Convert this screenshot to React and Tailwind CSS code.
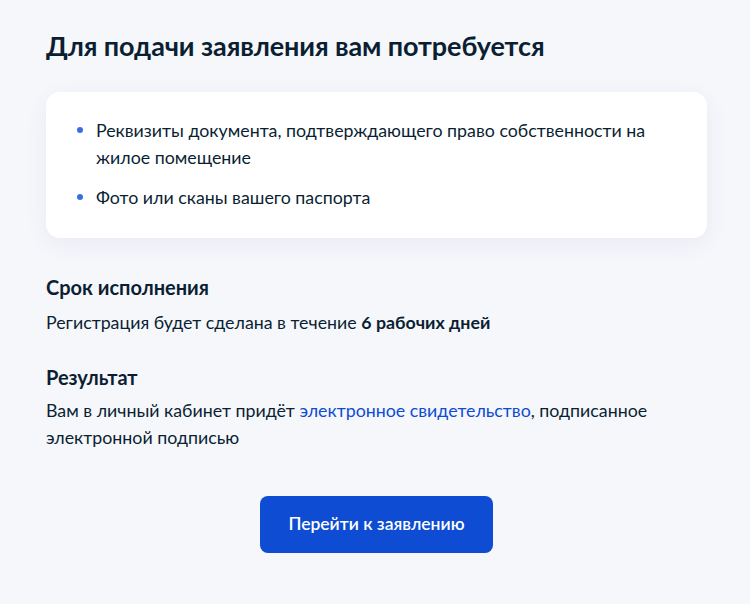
export default function App() {
  return (
    <div className="min-h-[604px] w-[750px] bg-[#f6f7fb] px-[46px] pt-[27px] text-[#0b1f33]" style={{ fontFamily: 'Lato, "Noto Sans", sans-serif' }}>
      <h1 className="text-[27px] font-bold leading-[38px] tracking-[-0.1px]">Для подачи заявления вам потребуется</h1>

      <div className="mt-[27px] w-[661px] rounded-[14px] bg-white px-[31px] pt-[25px] pb-[27px] shadow-[0_6px_24px_rgba(0,40,120,0.06)]">
        <ul className="flex flex-col gap-[13px] text-[17.8px] leading-[27px]">
          <li className="flex gap-[13px]">
            <span className="mt-[10px] h-[6px] w-[6px] shrink-0 rounded-full bg-[#3a6ee8]" />
            <span>Реквизиты документа, подтверждающего право собственности на жилое помещение</span>
          </li>
          <li className="flex gap-[13px]">
            <span className="mt-[10px] h-[6px] w-[6px] shrink-0 rounded-full bg-[#3a6ee8]" />
            <span>Фото или сканы вашего паспорта</span>
          </li>
        </ul>
      </div>

      <h2 className="mt-[35px] text-[20px] font-bold leading-[28px]">Срок исполнения</h2>
      <p className="mt-[8px] text-[17.8px] leading-[27px]">
        Регистрация будет сделана в течение <b className="font-bold">6 рабочих дней</b>
      </p>

      <h2 className="mt-[27px] text-[20px] font-bold leading-[28px]">Результат</h2>
      <p className="mt-[6px] w-[620px] text-[17.8px] leading-[27px]">
        Вам в личный кабинет придёт <span className="text-[#0d4cd3]">электронное свидетельство</span>, подписанное электронной подписью
      </p>

      <div className="mt-[45px] flex w-[661px] justify-center">
        <button className="h-[57px] w-[233px] rounded-[8px] bg-[#0d4cd3] text-[17.5px] font-semibold text-white">Перейти к заявлению</button>
      </div>
    </div>
  );
}
